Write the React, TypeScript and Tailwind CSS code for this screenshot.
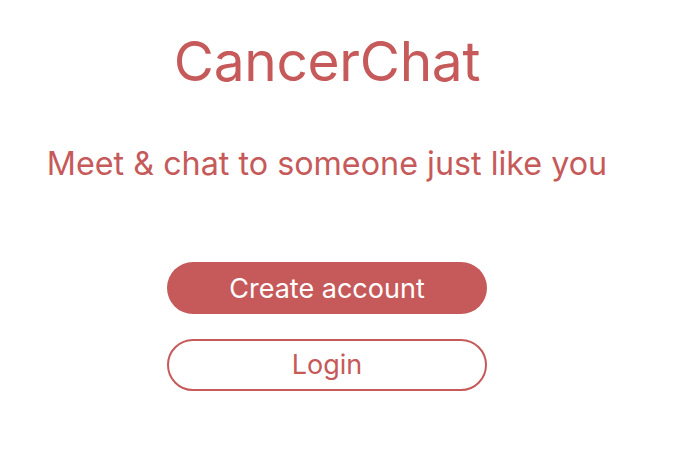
export default function App() {
  return (
    <div className="h-[450px] w-[684px] bg-white font-['Inter','Helvetica_Neue',sans-serif] text-[#c65a5a]">
      <div className="flex w-[654px] flex-col items-center pt-[21px]">
        <h1 className="text-[55px] leading-[80px] font-normal tracking-[-0.3px]">CancerChat</h1>
        <p className="mt-[43px] text-[32.3px] leading-[40px]">Meet &amp; chat to someone just like you</p>
        <div className="mt-[78px] flex flex-col gap-[25px]">
          <button className="h-[52px] w-[320px] rounded-full bg-[#c65a5a] pt-[2px] text-[27px] text-white">
            Create account
          </button>
          <button className="h-[52px] w-[320px] rounded-full border-2 border-[#c65a5a] bg-white pt-[1px] text-[27px] text-[#c65a5a]">
            Login
          </button>
        </div>
      </div>
    </div>
  );
}
